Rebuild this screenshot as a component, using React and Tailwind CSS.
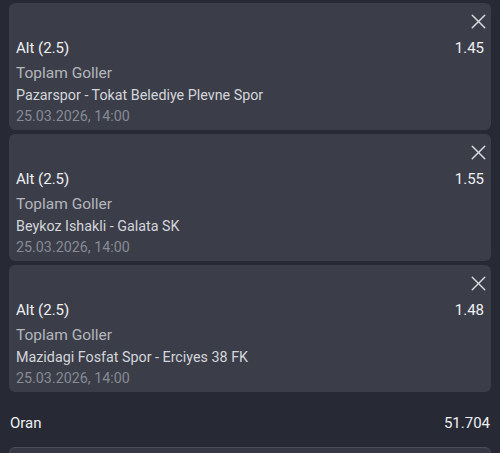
import React from 'react';
import { X } from 'lucide-react';

const bets = [
  { pick: 'Alt (2.5)', odd: '1.45', market: 'Toplam Goller', match: 'Pazarspor - Tokat Belediye Plevne Spor', date: '25.03.2026, 14:00' },
  { pick: 'Alt (2.5)', odd: '1.55', market: 'Toplam Goller', match: 'Beykoz Ishakli - Galata SK', date: '25.03.2026, 14:00' },
  { pick: 'Alt (2.5)', odd: '1.48', market: 'Toplam Goller', match: 'Mazidagi Fosfat Spor - Erciyes 38 FK', date: '25.03.2026, 14:00' },
];

function BetCard({ bet }) {
  return (
    <div className="rounded-[6px] bg-[#3b3e49] px-[7px] pt-[12px] pb-[3px]">
      <div className="flex h-[12px] items-center justify-end">
        <X className="h-[25px] w-[25px] shrink-0 -mr-[7px] text-[#d9dade]" strokeWidth={1.4} />
      </div>
      <div className="mt-[11px] flex h-[20px] items-center justify-between text-[15px] leading-[20px] text-[#eeeff2]">
        <span>{bet.pick}</span>
        <span>{bet.odd}</span>
      </div>
      <div className="mt-[3px] text-[15.5px] leading-[24px] text-[#b4b6bc]">{bet.market}</div>
      <div className="text-[14.3px] leading-[20px] text-[#d4d5da]">{bet.match}</div>
      <div className="text-[14.3px] leading-[22px] text-[#878a93]">{bet.date}</div>
    </div>
  );
}

export default function App() {
  return (
    <div className="h-[453px] w-[500px] overflow-hidden bg-[#272a35] px-[9px] pt-[3px] font-['Roboto',sans-serif]">
      <div className="flex flex-col gap-[4px]">
        {bets.map((bet, i) => (
          <BetCard key={i} bet={bet} />
        ))}
      </div>
      <div className="mt-[19px] flex h-[24px] items-center justify-between px-px text-[15px] text-[#eeeff2]">
        <span>Oran</span>
        <span>51.704</span>
      </div>
      <div className="mt-[12px] h-[30px] rounded-[6px] border border-[#4a4d58] bg-[#363945]" />
    </div>
  );
}
